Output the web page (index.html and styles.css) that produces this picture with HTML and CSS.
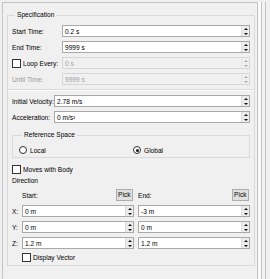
FILE: index.html
```html
<!DOCTYPE html>
<html>
<head>
<meta charset="utf-8">
<link rel="stylesheet" href="styles.css">
</head>
<body>
<div class="app">
  <div class="window">
    <fieldset class="group spec">
      <legend>Specification</legend>
      <div class="row">
        <span class="lbl w50">Start Time:</span>
        <div class="field"><span class="val">0.2 s</span><span class="spin"><i class="up"></i><i class="dn"></i></span></div>
      </div>
      <div class="row">
        <span class="lbl w50">End Time:</span>
        <div class="field"><span class="val">9999 s</span><span class="spin"><i class="up"></i><i class="dn"></i></span></div>
      </div>
      <div class="row">
        <span class="lbl w50 chk-lbl"><span class="box"></span>Loop Every:</span>
        <div class="field disabled"><span class="val">0 s</span><span class="spin"><i class="up"></i><i class="dn"></i></span></div>
      </div>
      <div class="row">
        <span class="lbl w50 dim">Until Time:</span>
        <div class="field disabled"><span class="val">9999 s</span><span class="spin"><i class="up"></i><i class="dn"></i></span></div>
      </div>
      <div class="sep"></div>
      <div class="row">
        <span class="lbl w42">Initial Velocity:</span>
        <div class="field"><span class="val">2.78 m/s</span><span class="spin"><i class="up"></i><i class="dn"></i></span></div>
      </div>
      <div class="row">
        <span class="lbl w42">Acceleration:</span>
        <div class="field"><span class="val">0 m/s²</span><span class="spin"><i class="up"></i><i class="dn"></i></span></div>
      </div>
      <fieldset class="group ref">
        <legend>Reference Space</legend>
        <div class="radios">
          <span class="opt"><span class="radio"></span>Local</span>
          <span class="opt"><span class="radio on"></span>Global</span>
        </div>
      </fieldset>
      <div class="row moves">
        <span class="chk-lbl"><span class="box"></span>Moves with Body</span>
      </div>
      <div class="dir-title">Direction</div>
      <div class="drow pickrow">
        <span class="axis"></span>
        <div class="col headcol"><span>Start:</span><span class="pick">Pick</span></div>
        <div class="col headcol end"><span>End:</span><span class="pick">Pick</span></div>
      </div>
      <div class="drow">
        <span class="axis">X:</span>
        <div class="col field"><span class="val">0 m</span><span class="spin"><i class="up"></i><i class="dn"></i></span></div>
        <div class="col field"><span class="val">-3 m</span><span class="spin"><i class="up"></i><i class="dn"></i></span></div>
      </div>
      <div class="drow">
        <span class="axis">Y:</span>
        <div class="col field"><span class="val">0 m</span><span class="spin"><i class="up"></i><i class="dn"></i></span></div>
        <div class="col field"><span class="val">0 m</span><span class="spin"><i class="up"></i><i class="dn"></i></span></div>
      </div>
      <div class="drow">
        <span class="axis">Z:</span>
        <div class="col field"><span class="val">1.2 m</span><span class="spin"><i class="up"></i><i class="dn"></i></span></div>
        <div class="col field"><span class="val">1.2 m</span><span class="spin"><i class="up"></i><i class="dn"></i></span></div>
      </div>
      <div class="row display">
        <span class="chk-lbl"><span class="box"></span>Display Vector</span>
      </div>
    </fieldset>
  </div>
  <div class="rail"></div>
  <div class="rail2"></div>
</div>
</body>
</html>
```

FILE: styles.css
```css
* { box-sizing: border-box; }
html, body { margin: 0; padding: 0; }
body {
  background: #f0f0f0;
  width: 270px;
  height: 279px;
  overflow: hidden;
  font-family: "Liberation Sans", Arial, sans-serif;
  font-size: 6.6px;
  color: #000;
}
.app {
  display: flex;
  height: 279px;
  padding-top: 2px;
  padding-left: 2px;
}
.window {
  width: 256px;
  border-top: 1px solid #c4c4c4;
  border-left: 1px solid #c4c4c4;
  border-right: 1px solid #c4c4c4;
  background: #f0f0f0;
}
.rail {
  width: 4px;
  background: #fafafa;
  border-right: 1px solid #c4c4c4;
}
.rail2 {
  width: 4px;
  background: #f3f3f3;
  border-right: 1px solid #c4c4c4;
}
fieldset.group {
  margin: 0;
  border: 1px solid #dadada;
  min-width: 0;
}
fieldset.group legend {
  padding: 0 2px;
  margin-left: 3px;
  line-height: 8px;
  height: 8px;
}
.spec {
  margin: 8px 2px 0 4px !important;
  padding: 6px 4px 1px 4px;
}
.row {
  display: flex;
  align-items: center;
  height: 12px;
  margin-bottom: 4px;
}
.lbl { flex: none; white-space: nowrap; }
.w50 { width: 50px; }
.w42 { width: 42px; }
.dim { color: #9a9a9a; }
.chk-lbl { display: flex; align-items: center; white-space: nowrap; }
.box {
  width: 9px; height: 9px;
  border: 1px solid #333;
  background: #fff;
  margin-right: 2px;
  flex: none;
}
.field {
  flex: 1;
  height: 12px;
  border: 1px solid #a9a9a9;
  background: #fff;
  display: flex;
  align-items: center;
  position: relative;
}
.field .val { flex: 1; padding-left: 2px; white-space: nowrap; }
.field.disabled { background: #f0f0f0; border-color: #d6d6d6; color: #a0a0a0; }
.spin {
  width: 8px;
  height: 10px;
  display: flex;
  flex-direction: column;
  justify-content: space-around;
  align-items: center;
  background: #ececec;
  border-left: 1px solid #dcdcdc;
  margin-right: 0;
}
.spin i {
  display: block;
  width: 0; height: 0;
  border-left: 2px solid transparent;
  border-right: 2px solid transparent;
}
.spin .up { border-bottom: 2px solid #111; }
.spin .dn { border-top: 2px solid #111; }
.disabled .spin { background: #f0f0f0; border-left-color: #e4e4e4; }
.disabled .spin .up { border-bottom-color: #a8a8a8; }
.disabled .spin .dn { border-top-color: #a8a8a8; }
.sep {
  height: 2px;
  border-top: 1px solid #dadada;
  border-bottom: 1px solid #fdfdfd;
  margin: 0 -4px 4px -4px;
}
.ref {
  margin: 8px 0 0 0 !important;
  padding: 5px 0 1px 6px;
}
.ref legend { margin-left: 6px; }
.radios {
  display: grid;
  grid-template-columns: 114px 1fr;
  height: 12px;
  align-items: center;
}
.opt { display: flex; align-items: center; }
.radio {
  width: 8px; height: 8px;
  border: 1px solid #333;
  border-radius: 50%;
  background: #fff;
  margin-right: 3px;
  position: relative;
  flex: none;
}
.radio.on::after {
  content: "";
  position: absolute;
  left: 1.5px; top: 1.5px;
  width: 3px; height: 3px;
  border-radius: 50%;
  background: #111;
}
.moves { margin-top: 5px; margin-bottom: 1px; }
.dir-title { height: 10px; line-height: 10px; margin-bottom: 3px; }
.drow {
  display: flex;
  align-items: center;
  height: 12px;
  margin-bottom: 4px;
}
.axis { width: 10px; flex: none; }
.col { width: 112px; flex: none; }
.col + .col { margin-left: 4px; }
.headcol {
  display: flex;
  justify-content: space-between;
  align-items: center;
  height: 12px;
  padding-right: 1px;
}
.headcol.end { padding-left: 0; }
.pick {
  height: 12px;
  line-height: 10px;
  padding: 0 1.5px;
  border: 1px solid #adadad;
  background: #e1e1e1;
}
.display { margin: -2px 0 1px 10px; }
```
